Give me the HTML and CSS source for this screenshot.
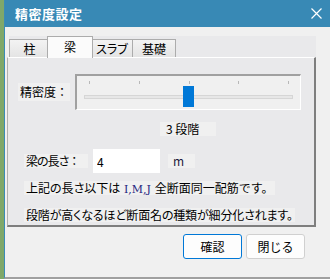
FILE: index.html
```html
<!DOCTYPE html>
<html lang="ja">
<head>
    <meta charset="UTF-8">
    <title>精密度設定</title>
    <link rel="stylesheet" href="styles.css">
</head>
<body>
    <div class="window">
        <!-- タイトルバー -->
        <div class="titlebar">
            <span class="title">精密度設定</span>
            <svg class="close" width="11" height="11" viewBox="0 0 11 11">
                <path d="M0.5 0.5 L10.5 10.5 M10.5 0.5 L0.5 10.5" stroke="#fff" stroke-width="1.2" fill="none"/>
            </svg>
        </div>

        <!-- タブ -->
        <div class="tabs">
            <div class="tab tab-col">柱</div>
            <div class="tab active">梁</div>
            <div class="tab tab-slab">スラブ</div>
            <div class="tab tab-base">基礎</div>
        </div>

        <div class="panel">
            <div class="slider-row">
                <span class="label label-precision">精密度<span class="colon">：</span></span>
                <div class="slider">
                    <div class="ticks">
                        <i></i><i></i><i></i><i></i><i></i>
                    </div>
                    <div class="track"></div>
                    <div class="thumb"></div>
                </div>
            </div>

            <div class="level"><span class="label">3 段階</span></div>

            <div class="length-row">
                <span class="label label-length"><span class="tight">梁の長さ</span><span class="colon">：</span></span>
                <input class="length-input" type="text" value="4">
                <span class="label label-unit">m</span>
            </div>

            <div class="note"><span class="label">上記の長さ以下は <span class="code">I,M,J</span> <span class="wide">全断面同一配筋です。</span></span></div>
            <div class="note"><span class="label">段階が高くなるほど断面名の種類が細分化されます。</span></div>
        </div>

        <!-- ボタン -->
        <div class="buttons">
            <button class="btn primary">確認</button>
            <button class="btn">閉じる</button>
        </div>
    </div>
</body>
</html>
```

FILE: styles.css
```css
* {
    box-sizing: border-box;
}
body {
    margin: 0;
    background: #7fa86a;
    font-family: "Noto Sans CJK JP", sans-serif;
    font-size: 12px;
    font-feature-settings: "palt";
    color: #000;
}
.window {
    margin-left: 4px;
    height: 279px;
    background: #f0f0f0;
    border-left: 1px solid #3b8bb7;
    border-bottom: 2px solid #a0a0a0;
}
.titlebar {
    height: 27px;
    background: #3889b5;
    color: #fff;
    display: flex;
    align-items: center;
    justify-content: space-between;
    padding: 0 8px 0 10px;
}
.title {
    font-size: 13px;
    font-weight: bold;
    letter-spacing: 0.5px;
}
.close {
    display: block;
}
.tabs {
    display: flex;
    align-items: flex-end;
    margin: 9px 0 0 4px;
    width: 307px;
    height: 21px;
    background: #e9e9eb;
}
.tab {
    height: 18px;
    line-height: 17px;
    padding: 0;
    text-align: center;
    background: linear-gradient(#f3f3f3, #e4e4e4);
    border: 1px solid #acacac;
    border-bottom: none;
    margin-right: -1px;
}
.tab-col {
    width: 41px;
}
.tab-slab {
    width: 42px;
}
.tab-base {
    width: 44px;
}
.tab.active {
    width: 46px;
    height: 22px;
    margin: 0 -2px -1px -2px;
    background: #fbfbfb;
    position: relative;
    z-index: 1;
    line-height: 19px;
}
.panel {
    margin-left: 2px;
    width: 309px;
    height: 170px;
    background: #e9e9eb;
    border-top: 1px solid #fff;
    border-left: 1px solid #b0b0b0;
    border-right: 2px solid #7e7e7e;
    border-bottom: 2px solid #7e7e7e;
}
.label {
    display: inline-block;
    background: #f0f0f0;
    height: 14px;
    line-height: 14px;
    white-space: nowrap;
}
.colon,
.wide {
    font-feature-settings: normal;
}
.tight {
    letter-spacing: -1px;
}
.slider-row {
    display: flex;
    align-items: center;
    margin-top: 16px;
}
.label-precision {
    margin-left: 10px;
    width: 52px;
    height: 18px;
    line-height: 18px;
    padding-left: 2px;
    margin-right: 5px;
}
.slider {
    position: relative;
    width: 226px;
    height: 36px;
    background: #f0f0f0;
    border-top: 2px solid #a0a0a0;
    border-left: 2px solid #a0a0a0;
    border-right: 1px solid #fff;
    border-bottom: 1px solid #fff;
}
.ticks {
    display: flex;
    justify-content: space-between;
    padding: 5px 11px 0 12px;
}
.ticks i {
    display: block;
    width: 1px;
    height: 3px;
    background: #b8b8b8;
}
.track {
    margin: 11px 7px 0 7px;
    height: 4px;
    background: #e7e7e7;
    border: 1px solid #d6d6d6;
}
.thumb {
    position: absolute;
    left: 106px;
    top: 10px;
    width: 11px;
    height: 21px;
    background: #0078d7;
}
.level {
    margin: 10px 0 0 152px;
}
.level .label {
    width: 56px;
    padding-left: 6px;
}
.length-row {
    display: flex;
    align-items: center;
    margin-top: 12px;
    height: 24px;
}
.label-length {
    margin-left: 16px;
    width: 64px;
    padding-left: 2px;
    margin-right: 5px;
}
.length-input {
    width: 67px;
    height: 24px;
    border: none;
    background: #fff;
    font-family: inherit;
    font-size: 12px;
    padding: 0 4px;
    margin-right: 8px;
    outline: none;
}
.label-unit {
    width: 27px;
    padding-left: 5px;
    color: #1c1c3c;
}
.note {
    margin: 6px 0 0 16px;
}
.note .label {
    padding: 0 2px;
}
.note + .note {
    margin-top: 10px;
}
.note + .note .label {
    letter-spacing: -0.15px;
}
.code {
    font-family: "DejaVu Serif", serif;
    font-size: 11px;
    color: #262680;
    margin: 0 1px;
}
.buttons {
    display: flex;
    justify-content: flex-end;
    gap: 4px;
    margin: 7px 25px 0 0;
}
.btn {
    width: 59px;
    height: 25px;
    background: #fdfdfd;
    border: 1px solid #d0d0d0;
    border-radius: 3px;
    font-family: inherit;
    font-size: 12px;
    color: #000;
    padding: 0;
}
.btn.primary {
    border-color: #0078d7;
}
```
